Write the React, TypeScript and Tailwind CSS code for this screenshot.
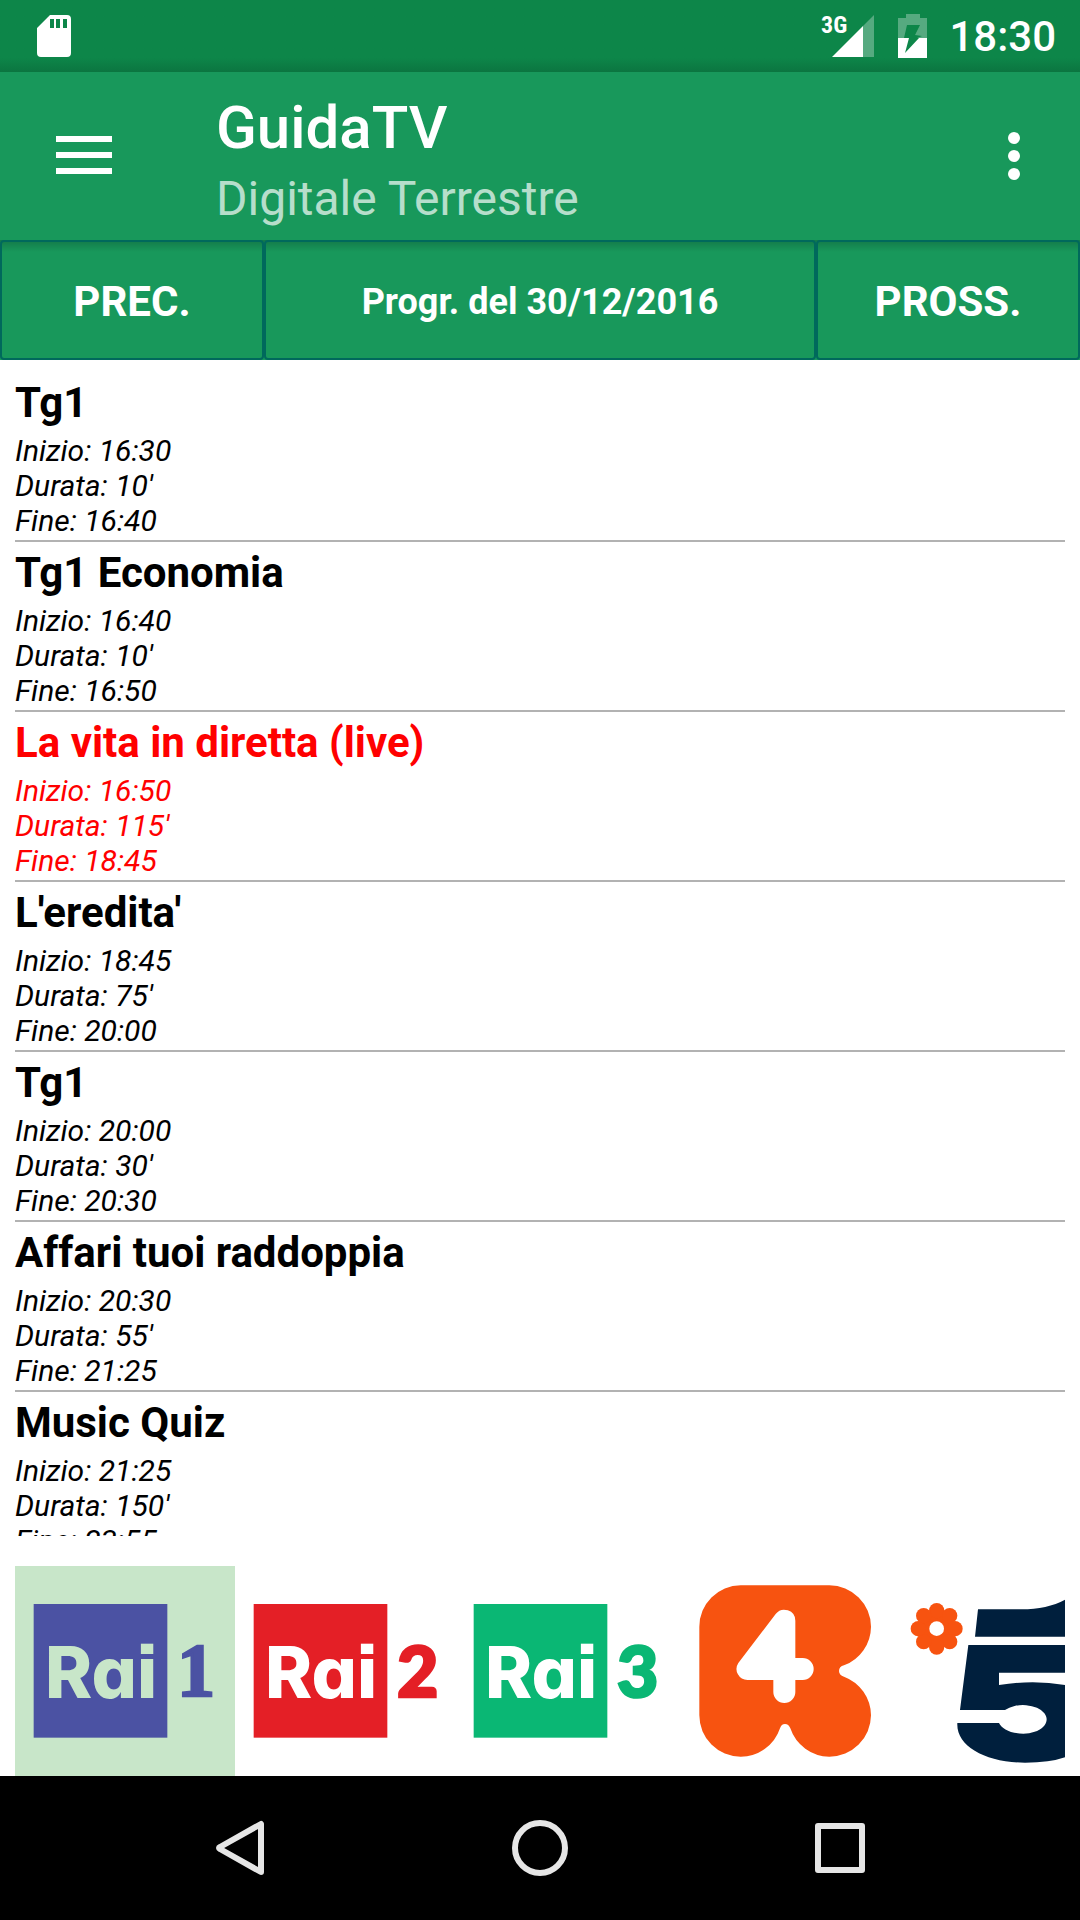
import React from "react";

type Programme = {
  title: string;
  start: string;
  length: string;
  end: string;
  live?: boolean;
};

const programmes: Programme[] = [
  { title: "Tg1", start: "16:30", length: "10'", end: "16:40" },
  { title: "Tg1 Economia", start: "16:40", length: "10'", end: "16:50" },
  { title: "La vita in diretta (live)", start: "16:50", length: "115'", end: "18:45", live: true },
  { title: "L'eredita'", start: "18:45", length: "75'", end: "20:00" },
  { title: "Tg1", start: "20:00", length: "30'", end: "20:30" },
  { title: "Affari tuoi raddoppia", start: "20:30", length: "55'", end: "21:25" },
  { title: "Music Quiz", start: "21:25", length: "150'", end: "23:55" },
];

function StatusBar() {
  return (
    <div className="flex h-[72px] shrink-0 items-center bg-gradient-to-b from-[#0d8649] from-80% to-[#0b7540] pl-9 pr-6 text-white">
      <svg className="h-[44px] w-9" viewBox="0 0 36 44" fill="currentColor" aria-hidden="true">
        <path
          fillRule="evenodd"
          d="M14 1H31Q35 1 35 5V39Q35 43 31 43H5Q1 43 1 39V14ZM14 5V14H18V5ZM20 5V14H24V5ZM27 5V14H31V5Z"
        />
      </svg>
      <div className="ml-auto flex items-center">
        <svg className="h-[44px] w-[54px]" viewBox="0 0 54 44" aria-label="3G">
          <path d="M43 12V43H54V1Z" fill="#fff" fillOpacity="0.3" />
          <path d="M12 43H43V12Z" fill="#fff" />
          <text x="1" y="19" fill="#fff" className="font-['Roboto_Condensed',Roboto,sans-serif] text-[24px] font-bold">
            3G
          </text>
        </svg>
        <svg className="ml-6 h-[44px] w-[30px]" viewBox="0 0 30 44" aria-label="Batteria">
          <path
            fill="#fff"
            fillOpacity="0.3"
            fillRule="evenodd"
            d="M8 0H22V4H29V24H19L24 22L17 21L22 11H9L6 24H0V4H8Z"
          />
          <path fill="#fff" d="M0 24H11L7 39L21 24H29V44H0Z" />
        </svg>
        <span className="ml-[21px] text-[42px] font-medium leading-[49px]">18:30</span>
      </div>
    </div>
  );
}

function AppBar() {
  return (
    <header className="flex h-[168px] shrink-0 items-center bg-[#18985b] pr-9 text-white">
      <button type="button" aria-label="Menu" className="flex h-[168px] w-[168px] items-center justify-center pb-0.5">
        <svg className="h-[38px] w-[56px]" viewBox="0 0 56 38" fill="currentColor" aria-hidden="true">
          <path d="M0 0H56V6H0ZM0 16H56V22H0ZM0 32H56V38H0Z" />
        </svg>
      </button>
      <div className="ml-12 flex-1 pt-2">
        <h1 className="text-[60px] font-medium leading-[70px]">GuidaTV</h1>
        <p className="mt-2 text-[48px] leading-[56px] text-white/70">Digitale Terrestre</p>
      </div>
      <button type="button" aria-label="Altre opzioni" className="flex h-[96px] w-[60px] items-center justify-center">
        <svg className="h-12 w-3" viewBox="0 0 12 48" fill="currentColor" aria-hidden="true">
          <circle cx="6" cy="6" r="6" />
          <circle cx="6" cy="24" r="6" />
          <circle cx="6" cy="42" r="6" />
        </svg>
      </button>
    </header>
  );
}

function DayBar() {
  return (
    <nav className="grid h-[120px] shrink-0 grid-cols-[22fr_46fr_22fr] bg-[#18985b] bg-gradient-to-b from-black/20 to-transparent to-10% font-bold text-white">
      <button type="button" className="rounded border-2 border-[#00695c] pt-0.5 text-[42px]">
        PREC.
      </button>
      <button type="button" className="rounded border-2 border-[#00695c] pt-1 text-[36px]">
        Progr. del 30/12/2016
      </button>
      <button type="button" className="rounded border-2 border-[#00695c] pt-0.5 text-[42px]">
        PROSS.
      </button>
    </nav>
  );
}

function ProgrammeRow({ item }: { item: Programme }) {
  return (
    <li className={`border-b-2 border-[#b2b2b2] pb-0.5 pt-1.5 ${item.live ? "text-[#ff0000]" : "text-black"}`}>
      <h2 className="mb-1.5 text-[42px] font-bold leading-[49px]">{item.title}</h2>
      <div className="text-[30px] italic leading-[35px]">
        <p>Inizio: {item.start}</p>
        <p>Durata: {item.length}</p>
        <p>Fine: {item.end}</p>
      </div>
    </li>
  );
}

function RaiLogo({ color, ink, children }: { color: string; ink: string; children: React.ReactNode }) {
  return (
    <svg className="h-[210px] w-[220px]" viewBox="45 48 660 630" fill={color} aria-hidden="true">
      <rect x="101" y="162" width="401" height="401" />
      <text
        x="135"
        y="444"
        fill={ink}
        className="font-[Inter,sans-serif] text-[214px] font-extrabold [font-feature-settings:'cv11','ss07']"
      >
        Rai
      </text>
      <g stroke={color} strokeWidth="8">
        {children}
      </g>
    </svg>
  );
}

function ReteLogo() {
  return (
    <svg className="h-[210px] w-[220px]" viewBox="-15 48 660 630" aria-hidden="true">
      <path
        fill="#f75310"
        d="M58 230A124 124 0 0 1 182 106H448A125 125 0 0 1 573 230A125 125 0 0 1 492 346Q477 350 477 363Q477 375 492 380A125 125 0 0 1 573 496A125 125 0 0 1 448 620A125 125 0 0 1 331 535Q326 522 315 522Q304 522 300 535A124 124 0 0 1 182 620A124 124 0 0 1 58 496Z"
      />
      <path
        fill="#fff"
        d="M287 192A33 33 0 0 1 346 212V324H368A33 33 0 0 1 368 390H346V426A33 33 0 0 1 280 426V390H203A33 33 0 0 1 175 339Z"
      />
    </svg>
  );
}

function CanaleLogo() {
  return (
    <svg className="h-[210px] w-[220px]" viewBox="645 48 660 630" aria-hidden="true">
      <g fill="#f75310">
        <circle cx="770" cy="236" r="52" />
        <circle cx="770" cy="182" r="23" />
        <circle cx="809" cy="197" r="23" />
        <circle cx="825" cy="236" r="23" />
        <circle cx="809" cy="275" r="23" />
        <circle cx="770" cy="291" r="23" />
        <circle cx="731" cy="275" r="23" />
        <circle cx="715" cy="236" r="23" />
        <circle cx="731" cy="197" r="23" />
      </g>
      <circle cx="770" cy="236" r="22" fill="#fff" />
      <g fill="#001f3d">
        <path d="M894 178H1025C1075 178 1120 168 1155 149L1200 120V260H885Z" />
        <path d="M865 285H1200V368H957V405Q1060 388 1155 405L1200 415V600L1155 622Q1110 638 1035 638C920 638 828 590 832 519H957C965 535 990 551 1030 551A71 43 0 1 0 975 480H840Z" />
      </g>
    </svg>
  );
}

function ChannelBar() {
  const cell = "h-[210px] w-[220px] shrink-0";
  return (
    <nav aria-label="Canali" className="mx-[15px] mt-[30px] flex shrink-0 overflow-hidden">
      <button type="button" aria-label="Rai 1" aria-pressed="true" className={`${cell} bg-[#c8e6c9]`}>
        <RaiLogo color="#4b52a3" ink="#c8e6c9">
          <text x="532" y="438" className="font-['Liberation_Serif',serif] text-[226px] font-bold">
            1
          </text>
        </RaiLogo>
      </button>
      <button type="button" aria-label="Rai 2" className={cell}>
        <RaiLogo color="#e41f26" ink="#fff">
          <text x="531" y="440" className="font-[Lato,sans-serif] text-[214px] font-black">
            2
          </text>
        </RaiLogo>
      </button>
      <button type="button" aria-label="Rai 3" className={cell}>
        <RaiLogo color="#0ab774" ink="#fff">
          <text x="531" y="440" className="font-[Lato,sans-serif] text-[214px] font-black">
            3
          </text>
        </RaiLogo>
      </button>
      <button type="button" aria-label="Rete 4" className={cell}>
        <ReteLogo />
      </button>
      <button type="button" aria-label="Canale 5" className={cell}>
        <CanaleLogo />
      </button>
    </nav>
  );
}

function SystemBar() {
  const button = "flex items-center justify-center";
  const icon = "h-[56px] w-[56px]";
  return (
    <div className="grid h-[144px] shrink-0 grid-cols-3 bg-black px-[90px] text-[#e6e6e6]">
      <button type="button" aria-label="Indietro" className={button}>
        <svg className={icon} viewBox="0 0 56 56" fill="none" stroke="currentColor" strokeWidth="6" strokeLinejoin="round" aria-hidden="true">
          <path d="M49 4V52L8 29Q6 28 8 27Z" />
        </svg>
      </button>
      <button type="button" aria-label="Home" className={button}>
        <svg className={icon} viewBox="0 0 56 56" fill="none" stroke="currentColor" strokeWidth="6" aria-hidden="true">
          <circle cx="28" cy="28" r="25" />
        </svg>
      </button>
      <button type="button" aria-label="Recenti" className={button}>
        <svg className={icon} viewBox="0 0 56 56" fill="none" stroke="currentColor" strokeWidth="6" strokeLinejoin="round" aria-hidden="true">
          <path d="M6 6H50V50H6Z" />
        </svg>
      </button>
    </div>
  );
}

export default function App() {
  return (
    <div className="flex h-screen flex-col bg-white font-[Roboto,sans-serif]">
      <StatusBar />
      <AppBar />
      <DayBar />
      <main className="min-h-0 flex-1 overflow-y-auto px-[15px] pt-3 [scrollbar-width:none]">
        <ul>
          {programmes.map((item) => (
            <ProgrammeRow key={item.title + item.start} item={item} />
          ))}
        </ul>
      </main>
      <ChannelBar />
      <SystemBar />
    </div>
  );
}
